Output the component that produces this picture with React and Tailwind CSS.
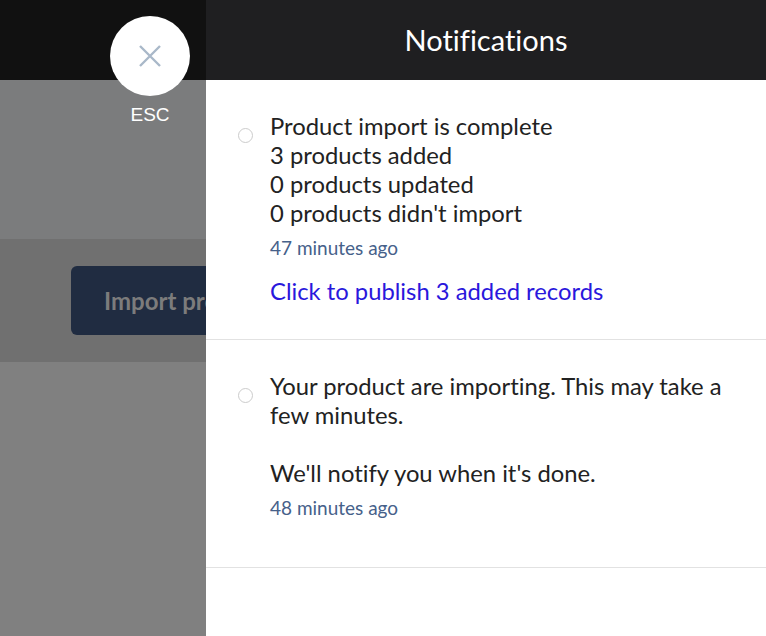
import React from "react";

const Dot = () => (
  <span className="mt-[16px] h-[15px] w-[15px] shrink-0 rounded-full border-[1.5px] border-[#cccccc] bg-white" />
);

const App = () => {
  return (
    <div className="relative flex h-[636px] w-[766px] overflow-hidden font-['Lato',sans-serif] [font-variant-ligatures:none]">
      <div className="flex w-[206px] shrink-0 flex-col bg-[#808080]">
        <div className="h-[80px] bg-[#111111]" />
        <div className="h-[159px] bg-[#7b7c7d]" />
        <div className="flex h-[123px] items-center overflow-hidden bg-[#707070] pl-[71px]">
          <div className="flex h-[69px] w-[300px] shrink-0 items-center rounded-[6px] bg-[#202c41] pl-[33px] text-[24px] font-bold whitespace-nowrap text-[#7c7c7c]">
            Import products
          </div>
        </div>
      </div>

      <div className="flex-1 bg-white">
        <div className="flex h-[80px] items-center justify-center bg-[#1f1f21] text-[29px] text-white">
          Notifications
        </div>

        <div className="flex h-[260px] gap-[17px] border-b border-[#e2e2e2] pt-[32px] pl-[32px]">
          <Dot />
          <div>
            <div className="text-[23.8px] leading-[29px] text-[#222222]">
              <div>Product import is complete</div>
              <div>3 products added</div>
              <div>0 products updated</div>
              <div>0 products didn't import</div>
            </div>
            <div className="mt-[8px] text-[19px] leading-[24px] text-[#46618a]">47 minutes ago</div>
            <div className="mt-[17px] text-[23.8px] leading-[29px] text-[#2a17dc]">Click to publish 3 added records</div>
          </div>
        </div>

        <div className="flex h-[228px] gap-[17px] border-b border-[#e2e2e2] pt-[32px] pl-[32px]">
          <Dot />
          <div className="w-[470px]">
            <div className="text-[23.8px] leading-[29px] text-[#222222]">
              <div>Your product are importing. This may take a few minutes.</div>
              <div className="mt-[29px]">We'll notify you when it's done.</div>
            </div>
            <div className="mt-[8px] text-[19px] leading-[24px] text-[#46618a]">48 minutes ago</div>
          </div>
        </div>
      </div>

      <div className="absolute top-[16px] left-[110px] flex w-[80px] flex-col items-center">
        <div className="flex h-[80px] w-[80px] items-center justify-center rounded-full bg-white">
          <svg width="24" height="24" viewBox="0 0 24 24" fill="none" stroke="#a9b8c9" strokeWidth="2.4">
            <path d="M2 2 L22 22 M22 2 L2 22" />
          </svg>
        </div>
        <div className="mt-[8px] font-['Liberation_Sans',sans-serif] text-[19px] leading-[22px] text-white">ESC</div>
      </div>
    </div>
  );
};

export default App;
